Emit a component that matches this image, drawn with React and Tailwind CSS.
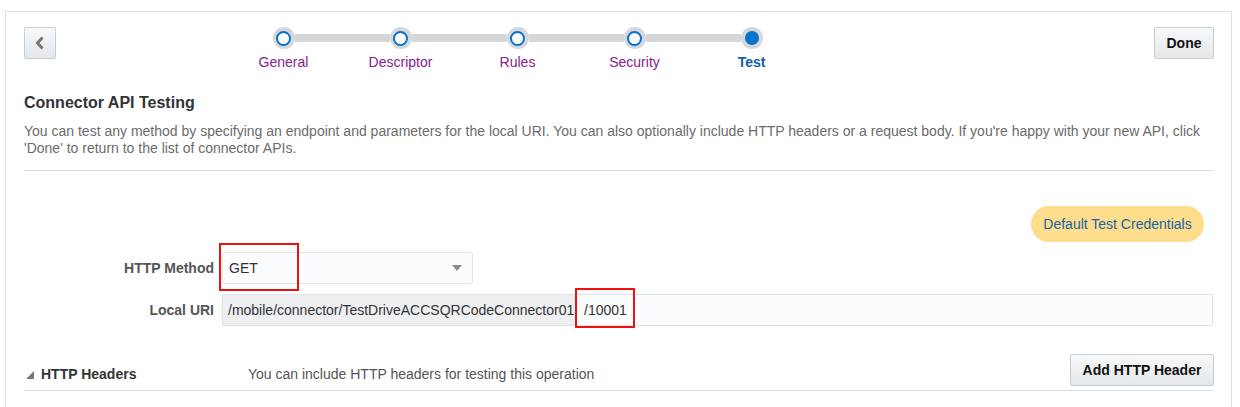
import React from "react";

const steps = [
  { label: "General" },
  { label: "Descriptor" },
  { label: "Rules" },
  { label: "Security" },
  { label: "Test", active: true },
];

function Stepper() {
  return (
    <div className="flex ml-[169px]">
      {steps.map((s, i) => (
        <div key={s.label} className="flex flex-col items-center w-[117px]">
          <div className="flex items-center w-full h-[22px]">
            <div className={"flex-1 h-[8px] " + (i === 0 ? "" : "bg-[#d6d7d9]")} />
            <div className="w-[22px] h-[22px] rounded-full bg-[#d6d7d9] flex items-center justify-center">
              {s.active ? (
                <div className="w-[14px] h-[14px] rounded-full bg-[#0572ce]" />
              ) : (
                <div className="w-[15px] h-[15px] rounded-full bg-white border-2 border-[#0572ce]" />
              )}
            </div>
            <div className={"flex-1 h-[8px] " + (i === steps.length - 1 ? "" : "bg-[#d6d7d9]")} />
          </div>
          <div
            className={
              "mt-[5px] text-[14px] leading-[16px] " +
              (s.active ? "font-bold text-[#1061a8]" : "text-[#89208d]")
            }
          >
            {s.label}
          </div>
        </div>
      ))}
    </div>
  );
}

const btn =
  "h-[32px] border border-[#c4ced7] rounded-[2px] bg-gradient-to-b from-[#f7f8f9] to-[#e4e8eb] text-[14px] font-bold text-[#111] flex items-center justify-center";

export default function App() {
  return (
    <div className="w-full h-[407px] bg-white overflow-hidden" style={{ fontFamily: '"Liberation Sans", Arial, sans-serif' }}>
      <div className="ml-[5px] mt-[11px] w-[1227px] h-[420px] border border-[#dbe1e8] border-b-0 pl-[18px] pr-[17px]">
        {/* top bar */}
        <div className="flex items-start pt-[15px]">
          <button className={btn + " w-[32px]"}>
            <svg width="10" height="14" viewBox="0 0 10 14">
              <path d="M7.5 1.5 L2.5 7 L7.5 12.5" fill="none" stroke="#777" strokeWidth="3" strokeLinejoin="miter" />
            </svg>
          </button>
          <Stepper />
          <div className="flex-1" />
          <button className={btn + " w-[60px]"}>Done</button>
        </div>

        {/* heading */}
        <div className="mt-[23px] text-[16px] leading-[20px] font-bold text-[#333]">Connector API Testing</div>
        <p className="mt-[10px] text-[14px] leading-[17px] text-[#6b6b6b] pr-[4px]">
          You can test any method by specifying an endpoint and parameters for the local URI. You can also optionally include HTTP headers or a request body. If you're happy with your new API, click 'Done' to return to the list of connector APIs.
        </p>
        <div className="mt-[13px] h-px bg-[#dbe1e8]" />

        {/* credentials */}
        <div className="flex justify-end pr-[10px] mt-[35px]">
          <button className="h-[36px] w-[173px] rounded-full bg-[#fbdd8c] text-[14px] text-[#1d62a7] flex items-center justify-center">
            Default Test Credentials
          </button>
        </div>

        {/* HTTP method */}
        <div className="flex items-center mt-[10px]">
          <div className="w-[190px] text-right text-[14px] font-bold text-[#555]">HTTP Method</div>
          <div className="relative ml-[8px]">
            <div className="w-[251px] h-[32px] border border-[#dfe3e8] bg-[#fbfcfd] rounded-[2px] flex items-center justify-between pl-[6px] pr-[10px]">
              <span className="text-[14px] text-[#333]">GET</span>
              <svg width="10" height="6" viewBox="0 0 10 6">
                <path d="M0 0 L10 0 L5 6 Z" fill="#8a8a8a" />
              </svg>
            </div>
            <div className="absolute left-[-3px] top-[-9px] w-[80px] h-[48px] border-2 border-[#ee1111]" />
          </div>
        </div>

        {/* Local URI */}
        <div className="flex items-center mt-[10px] pr-[1px]">
          <div className="w-[190px] text-right text-[14px] font-bold text-[#555]">Local URI</div>
          <div className="ml-[8px] flex flex-1 h-[32px]">
            <div className="w-[354px] h-full bg-[#eeeff1] border border-[#dfe3e8] border-r-0 rounded-l-[2px] flex items-center pl-[5px] text-[14px] text-[#333] whitespace-nowrap overflow-hidden">
              /mobile/connector/TestDriveACCSQRCodeConnector01
            </div>
            <div className="relative flex-1 h-full border border-[#dfe3e8] bg-[#fbfcfd] rounded-r-[2px] flex items-center pl-[7px] text-[14px] text-[#333]">
              /10001
              <div className="absolute left-[-2px] top-[-7px] w-[60px] h-[40px] border-2 border-[#ee1111]" />
            </div>
          </div>
        </div>

        {/* HTTP headers */}
        <div className="flex items-center mt-[28px]">
          <div className="flex items-center mt-[8px]">
            <svg width="10" height="10" viewBox="0 0 10 10" className="ml-[1px] mt-[1px]">
              <path d="M9 1 L9 9 L1 9 Z" fill="#777" />
            </svg>
            <div className="ml-[6px] w-[207px] text-[14px] font-bold text-[#333]">HTTP Headers</div>
            <div className="text-[14px] text-[#555]">You can include HTTP headers for testing this operation</div>
          </div>
          <div className="flex-1" />
          <button className={btn + " w-[144px]"}>Add HTTP Header</button>
        </div>
        <div className="mt-[4px] h-px bg-[#dbe1e8]" />
      </div>
    </div>
  );
}
